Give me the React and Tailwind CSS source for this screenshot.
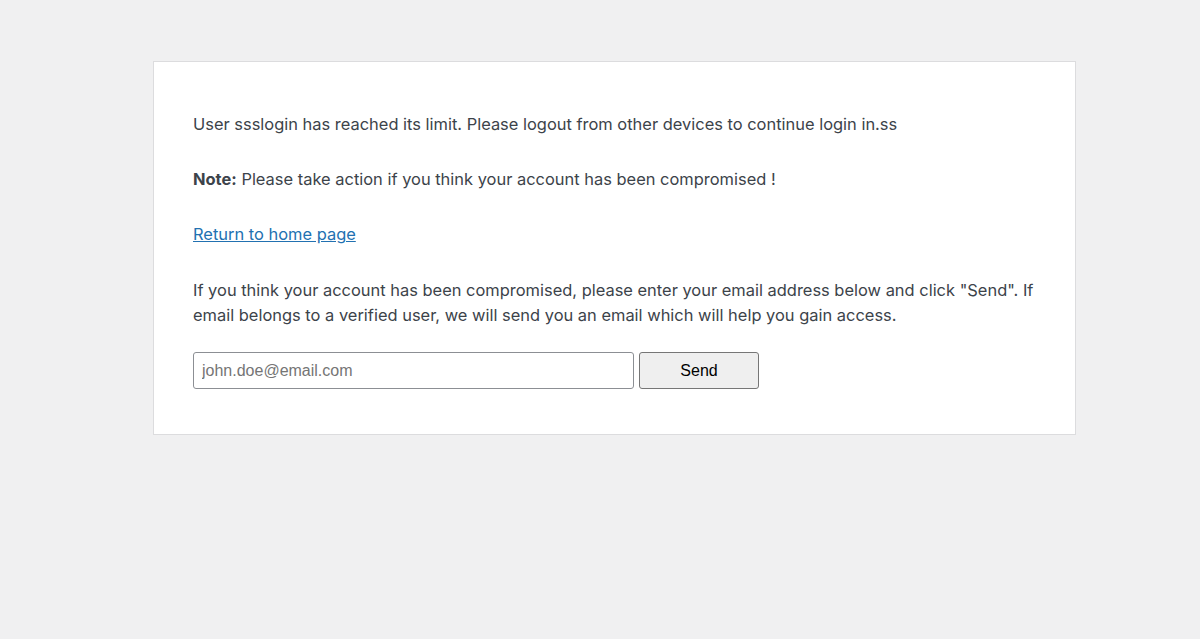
export default function App() {
  return (
    <div className="min-h-[639px] bg-[#f0f0f1] pt-[61px] font-['Inter','Noto_Sans',sans-serif] text-[#3c434a]">
      <div className="ml-[153px] w-[923px] border border-[#dcdcde] bg-white px-[39px] pb-[45px] pt-[50px] text-[16.45px] leading-[25px]">
        <p>
          User ssslogin has reached its limit. Please logout from other devices to continue login in.ss
        </p>
        <p className="mt-[30px]">
          <strong className="font-bold">Note:</strong> Please take action if you think your account has been compromised !
        </p>
        <p className="mt-[30px]">
          <a href="#" className="text-[#2271b1] underline">Return to home page</a>
        </p>
        <p className="mt-[31px]">
          If you think your account has been compromised, please enter your email address below and click "Send". If email belongs to a verified user, we will send you an email which will help you gain access.
        </p>
        <div className="mt-[24px] flex gap-[5px] font-['Liberation_Sans',Arial,sans-serif]">
          <input
            type="text"
            placeholder="john.doe@email.com"
            className="h-[37px] w-[441px] rounded-[3px] border border-[#8c8f94] px-[8px] text-[16px] text-[#2c3338] placeholder:text-[#757575] outline-none"
          />
          <button className="h-[37px] w-[120px] rounded-[3px] border border-[#767676] bg-[#efefef] text-[16px] text-black">
            Send
          </button>
        </div>
      </div>
    </div>
  )
}
